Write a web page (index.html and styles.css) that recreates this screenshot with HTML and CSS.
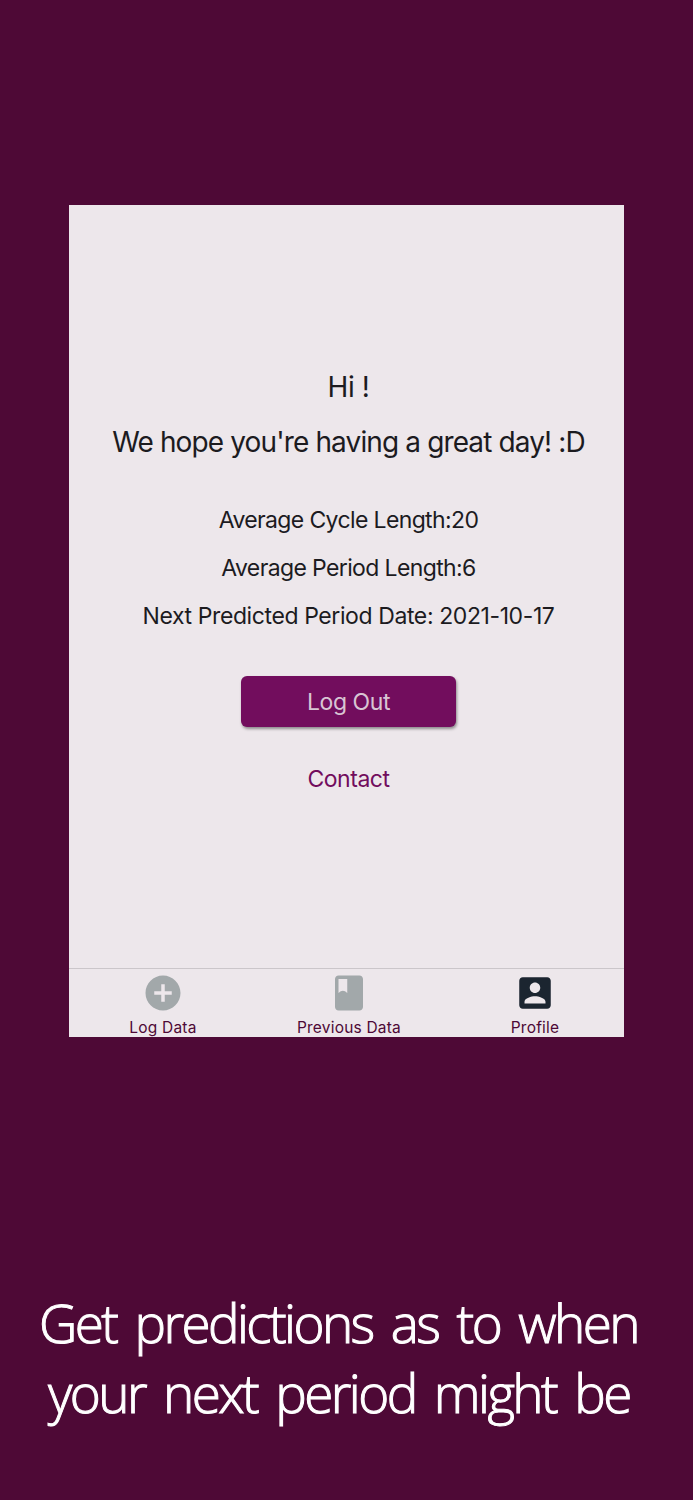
FILE: index.html
```html
<!DOCTYPE html>
<html lang="en">
<head>
    <meta charset="UTF-8">
    <meta name="viewport" content="width=device-width, initial-scale=1.0">
    <title>Period Tracker - Profile</title>
    <link rel="stylesheet" href="styles.css">
</head>
<body>

<main class="screen">
    <div class="app">
        <section class="profile">
            <h1 class="greeting">Hi !</h1>
            <p class="message">We hope you're having a great day! :D</p>

            <div class="stats">
                <p class="cycle">Average Cycle Length:20</p>
                <p class="period">Average Period Length:6</p>
                <p class="next">Next Predicted Period Date: 2021-10-17</p>
            </div>

            <button class="logout" type="button">Log Out</button>
            <a class="contact" href="#">Contact</a>
        </section>

        <nav class="tabs">
            <a class="tab" href="#">
                <svg viewBox="0 0 24 24"><path d="M12 2C6.48 2 2 6.48 2 12s4.48 10 10 10 10-4.48 10-10S17.52 2 12 2zm5 11h-4v4h-2v-4H7v-2h4V7h2v4h4v2z"/></svg>
                <span>Log Data</span>
            </a>
            <a class="tab" href="#">
                <svg viewBox="0 0 24 24"><path fill-rule="evenodd" d="M18 2H6c-1.100 0-2 .900-2 2v16c0 1.100.900 2 2 2h12c1.100 0 2-.900 2-2V4c0-1.100-.900-2-2-2zM6 4h5v8Q8.500 9.500 6 12V4z"/></svg>
                <span>Previous Data</span>
            </a>
            <a class="tab active" href="#">
                <svg viewBox="0 0 24 24"><path fill-rule="evenodd" d="M3 5v14c0 1.100.890 2 2 2h14c1.100 0 2-.900 2-2V5c0-1.100-.900-2-2-2H5c-1.110 0-2 .900-2 2zm12 4c0 1.660-1.340 3-3 3s-3-1.340-3-3 1.340-3 3-3 3 1.340 3 3zm-9 8c0-2 4-3.100 6-3.100s6 1.100 6 3.100v1H6v-1z"/></svg>
                <span>Profile</span>
            </a>
        </nav>
    </div>

    <h2 class="caption">
        <span class="line-one">Get predictions as to when</span>
        <span class="line-two">your next period might be</span>
    </h2>
</main>

</body>
</html>
```

FILE: styles.css
```css
* {
    margin: 0;
    padding: 0;
    box-sizing: border-box;
}

body {
    font-family: 'Inter', 'Liberation Sans', sans-serif;
    background-color: #4e0936;
    color: #1c1b1f;
}

.screen {
    height: 1500px;
    padding-top: 205px;
    overflow: hidden;
}

/* App card */
.app {
    width: 555px;
    height: 832px;
    margin-left: 69px;
    background-color: #ede7eb;
    display: flex;
    flex-direction: column;
    overflow: hidden;
}

.profile {
    width: 559px;
    flex: 1;
    padding-top: 162px;
    display: flex;
    flex-direction: column;
    align-items: center;
    white-space: nowrap;
}

.greeting {
    font-size: 28px;
    font-weight: 400;
    line-height: 40px;
    letter-spacing: -0.4px;
}

.message {
    margin-top: 15px;
    font-size: 28px;
    line-height: 40px;
    letter-spacing: -0.87px;
}

.stats {
    margin-top: 34px;
    font-size: 23px;
    line-height: 48px;
    letter-spacing: -0.63px;
    text-align: center;
}

.stats .next {
    letter-spacing: -0.4px;
}

.logout {
    width: 215px;
    height: 51px;
    margin-top: 36px;
    font-family: inherit;
    font-size: 23px;
    letter-spacing: -0.45px;
    color: #d8c5d4;
    background-color: #720d5d;
    border: none;
    border-radius: 6px;
    box-shadow: 1px 2px 3px rgba(0, 0, 0, 0.4);
    cursor: pointer;
}

.contact {
    margin-top: 32px;
    font-size: 23px;
    line-height: 40px;
    letter-spacing: -0.45px;
    color: #720d5d;
    text-decoration: none;
}

/* Bottom tabs */
.tabs {
    width: 559px;
    height: 69px;
    padding: 3px 0 0 1px;
    border-top: 1px solid #cbc6ca;
    display: flex;
}

.tab {
    flex: 1;
    display: flex;
    flex-direction: column;
    align-items: center;
    font-size: 15.5px;
    line-height: 20px;
    letter-spacing: 0.2px;
    color: #4e0936;
    text-decoration: none;
}

.tab svg {
    width: 42px;
    height: 42px;
    margin-bottom: 4px;
    fill: #a2a8aa;
    flex-shrink: 0;
}

.tab.active svg {
    fill: #1b2530;
}

/* Caption */
.caption {
    margin-top: 251px;
    font-family: 'Open Sans', 'Noto Sans', sans-serif;
    font-size: 53px;
    font-weight: 300;
    line-height: 70px;
    letter-spacing: -2.6px;
    word-spacing: 7px;
    color: white;
    -webkit-text-stroke: 1px white;
    white-space: nowrap;
}

.caption span {
    display: block;
}

.line-one {
    padding-left: 39px;
}

.line-two {
    padding-left: 48px;
}
```
